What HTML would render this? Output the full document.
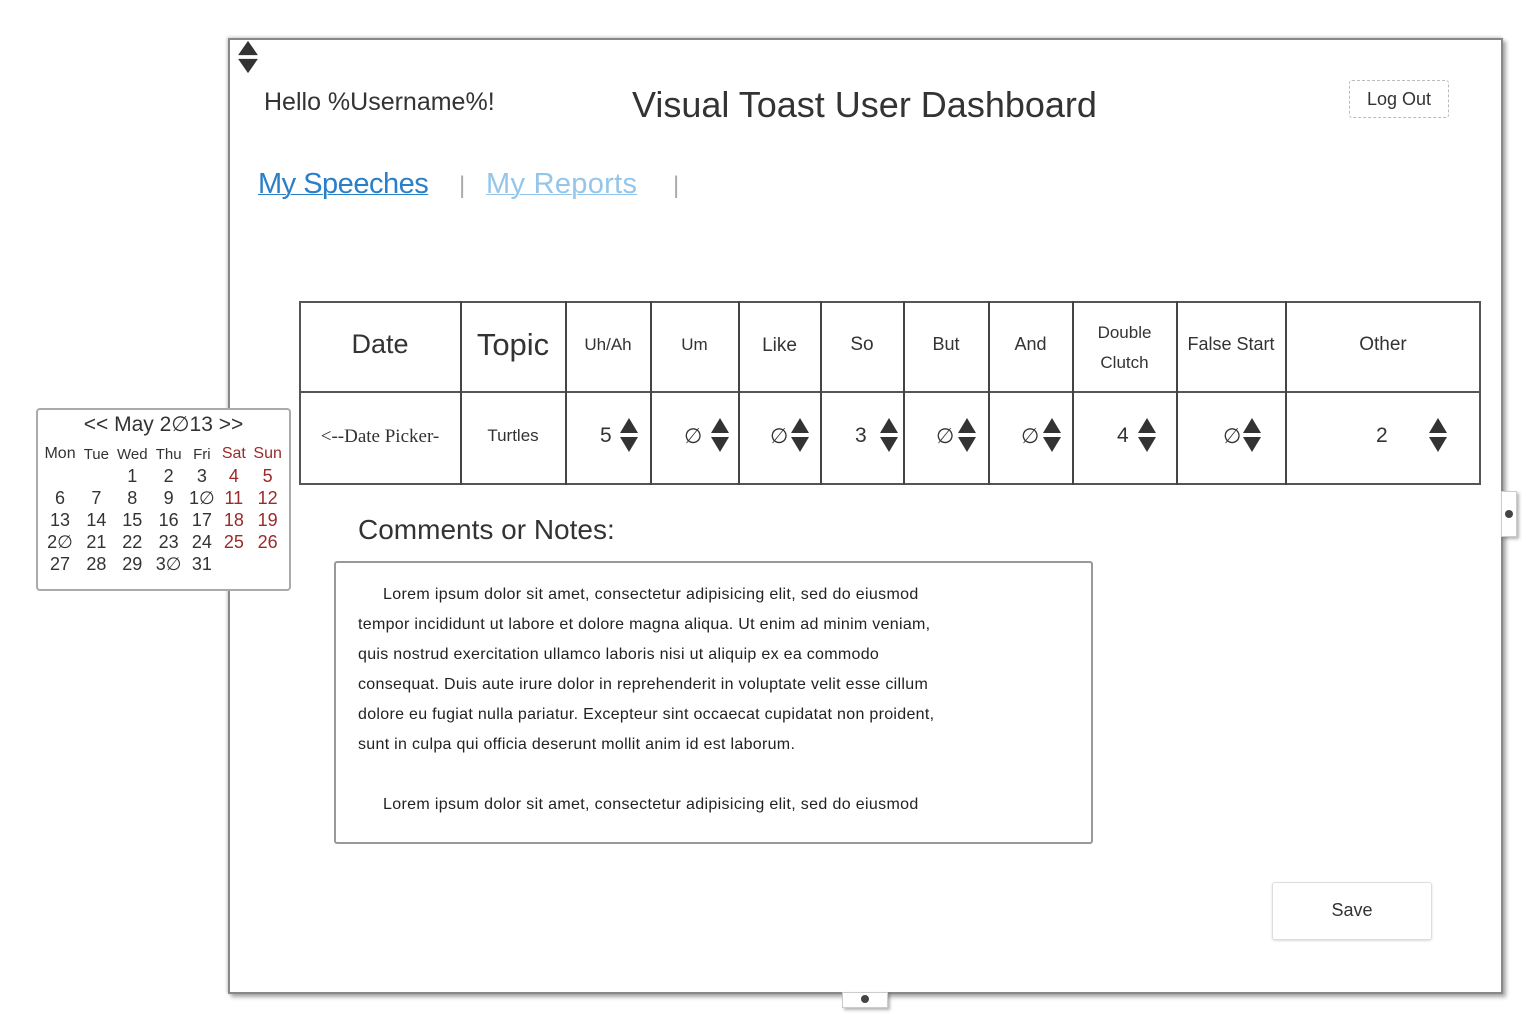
<!DOCTYPE html>
<html><head><meta charset="utf-8"><style>
*{margin:0;padding:0;box-sizing:border-box}
body{width:1526px;height:1014px;background:#fff;position:relative;overflow:hidden;font-family:"Liberation Sans",sans-serif;color:#333}
.a{position:absolute;white-space:nowrap}
.frame{position:absolute;left:228px;top:38px;width:1275px;height:956px;border:2px solid #888;box-shadow:3px 3px 4px rgba(0,0,0,.35),-1px -1px 3px rgba(0,0,0,.2);background:#fff}
.c{text-align:center}
.sp{position:absolute;width:18px;height:34px}
.sp:before{content:"";position:absolute;left:0;top:0;border-left:9px solid transparent;border-right:9px solid transparent;border-bottom:15px solid #333}
.sp:after{content:"";position:absolute;left:0;top:19px;border-left:9px solid transparent;border-right:9px solid transparent;border-top:15px solid #333}
.vl{position:absolute;width:2px;background:#444}
.hl{position:absolute;height:2px;background:#555}
.num{font-size:21px}
.cal td{text-align:center;font-size:18px;height:22px;padding:0}
.red{color:#9b2a2a}
.tx{font-size:16px;color:#222}
</style></head><body>
<div class="frame"></div>
<div class="sp" style="left:239px;top:40px;transform:scale(1.1,0.95)"></div>
<div class="a" style="left:264px;top:88px;font-size:25px;color:#333">Hello %Username%!</div>
<div class="a" style="left:632px;top:84px;font-size:36px;color:#333">Visual Toast User Dashboard</div>
<div class="a c" style="left:1349px;top:80px;width:100px;height:38px;border:1px dashed #bbb;border-radius:3px;font-size:18px;line-height:36px">Log Out</div>
<div class="a" style="left:258px;top:168px;font-size:29px;letter-spacing:-0.5px;color:#2a7fc9;text-decoration:underline;text-decoration-thickness:1px">My Speeches</div>
<div class="a" style="left:459px;top:172px;font-size:24px;color:#aaa">|</div>
<div class="a" style="left:486px;top:168px;font-size:29px;letter-spacing:.3px;color:#93c6ea;text-decoration:underline;text-decoration-thickness:1px">My Reports</div>
<div class="a" style="left:673px;top:172px;font-size:24px;color:#aaa">|</div>

<div class="a" style="left:299px;top:301px;width:1182px;height:184px;border:2px solid #555"></div>
<div class="hl" style="left:299px;top:391px;width:1182px"></div>
<div class="vl" style="left:460px;top:301px;height:184px"></div>
<div class="vl" style="left:565px;top:301px;height:184px"></div>
<div class="vl" style="left:650px;top:301px;height:184px"></div>
<div class="vl" style="left:738px;top:301px;height:184px"></div>
<div class="vl" style="left:820px;top:301px;height:184px"></div>
<div class="vl" style="left:903px;top:301px;height:184px"></div>
<div class="vl" style="left:988px;top:301px;height:184px"></div>
<div class="vl" style="left:1072px;top:301px;height:184px"></div>
<div class="vl" style="left:1176px;top:301px;height:184px"></div>
<div class="vl" style="left:1285px;top:301px;height:184px"></div>
<div class="a c" style="left:300px;top:329px;width:160px;font-size:27px">Date</div>
<div class="a c" style="left:461px;top:327px;width:104px;font-size:31px">Topic</div>
<div class="a c" style="left:566px;top:335px;width:84px;font-size:17px">Uh/Ah</div>
<div class="a c" style="left:651px;top:335px;width:87px;font-size:17px">Um</div>
<div class="a c" style="left:739px;top:335px;width:81px;font-size:19px">Like</div>
<div class="a c" style="left:821px;top:334px;width:82px;font-size:19px">So</div>
<div class="a c" style="left:904px;top:334px;width:84px;font-size:18px">But</div>
<div class="a c" style="left:989px;top:334px;width:83px;font-size:18px">And</div>
<div class="a c" style="left:1073px;top:318px;width:103px;font-size:17px;line-height:30px;white-space:normal">Double<br>Clutch</div>
<div class="a c" style="left:1177px;top:334px;width:108px;font-size:18px">False Start</div>
<div class="a c" style="left:1286px;top:334px;width:194px;font-size:19px">Other</div>
<div class="a c" style="left:300px;top:426px;width:160px;font-family:'Liberation Serif',serif;font-size:19px;color:#333">&lt;--Date Picker-</div>
<div class="a c" style="left:461px;top:426px;width:104px;font-size:17px">Turtles</div>
<div class="a num" style="left:600px;top:424px">5</div><div class="sp" style="left:620px;top:418px"></div>
<div class="a num" style="left:684px;top:424px">&#8709;</div><div class="sp" style="left:711px;top:418px"></div>
<div class="a num" style="left:770px;top:424px">&#8709;</div><div class="sp" style="left:791px;top:418px"></div>
<div class="a num" style="left:855px;top:424px">3</div><div class="sp" style="left:880px;top:418px"></div>
<div class="a num" style="left:936px;top:424px">&#8709;</div><div class="sp" style="left:958px;top:418px"></div>
<div class="a num" style="left:1021px;top:424px">&#8709;</div><div class="sp" style="left:1043px;top:418px"></div>
<div class="a num" style="left:1117px;top:424px">4</div><div class="sp" style="left:1138px;top:418px"></div>
<div class="a num" style="left:1223px;top:424px">&#8709;</div><div class="sp" style="left:1243px;top:418px"></div>
<div class="a num" style="left:1376px;top:424px">2</div><div class="sp" style="left:1429px;top:418px"></div>

<div class="a" style="left:358px;top:514px;font-size:28px;color:#333">Comments or Notes:</div>
<div class="a" style="left:334px;top:561px;width:759px;height:283px;border:2px solid #999;border-radius:3px"></div>
<div class="a tx" style="left:383px;top:586px;letter-spacing:.35px">Lorem ipsum dolor sit amet, consectetur adipisicing elit, sed do eiusmod</div>
<div class="a tx" style="left:358px;top:616px;letter-spacing:.3px">tempor incididunt ut labore et dolore magna aliqua. Ut enim ad minim veniam,</div>
<div class="a tx" style="left:358px;top:646px;letter-spacing:.3px">quis nostrud exercitation ullamco laboris nisi ut aliquip ex ea commodo</div>
<div class="a tx" style="left:358px;top:676px;letter-spacing:.3px">consequat. Duis aute irure dolor in reprehenderit in voluptate velit esse cillum</div>
<div class="a tx" style="left:358px;top:706px;letter-spacing:.3px">dolore eu fugiat nulla pariatur. Excepteur sint occaecat cupidatat non proident,</div>
<div class="a tx" style="left:358px;top:736px;letter-spacing:.3px">sunt in culpa qui officia deserunt mollit anim id est laborum.</div>
<div class="a tx" style="left:383px;top:796px;letter-spacing:.35px">Lorem ipsum dolor sit amet, consectetur adipisicing elit, sed do eiusmod</div>

<div class="a c" style="left:1272px;top:882px;width:160px;height:58px;border:1px solid #ddd;border-radius:3px;box-shadow:0 1px 2px rgba(0,0,0,.15);font-size:18px;line-height:54px">Save</div>

<div class="a" style="left:1501px;top:491px;width:16px;height:46px;background:#fff;border:1px solid #ccc;box-shadow:2px 2px 3px rgba(0,0,0,.3)"></div>
<div class="a" style="left:1505px;top:510px;width:8px;height:8px;border-radius:50%;background:#444"></div>
<div class="a" style="left:842px;top:992px;width:46px;height:16px;background:#fff;border:1px solid #ccc;box-shadow:2px 2px 3px rgba(0,0,0,.3)"></div>
<div class="a" style="left:861px;top:995px;width:8px;height:8px;border-radius:50%;background:#444"></div>

<div class="a" style="left:36px;top:408px;width:255px;height:183px;border:2px solid #aaa;border-radius:4px;background:#fff"></div>
<div class="a c" style="left:36px;top:412px;width:255px;font-size:21px">&lt;&lt; May 2&#8709;13 &gt;&gt;</div>
<table class="a cal" style="left:40px;top:443px;width:246px;border-collapse:collapse">
<tr><td style="font-size:16px">Mon</td><td style="font-size:15px">Tue</td><td style="font-size:15px">Wed</td><td style="font-size:15px">Thu</td><td style="font-size:15px">Fri</td><td class="red" style="font-size:16px">Sat</td><td class="red" style="font-size:16px">Sun</td></tr>
<tr><td></td><td></td><td>1</td><td>2</td><td>3</td><td class="red">4</td><td class="red">5</td></tr>
<tr><td>6</td><td>7</td><td>8</td><td>9</td><td>1&#8709;</td><td class="red">11</td><td class="red">12</td></tr>
<tr><td>13</td><td>14</td><td>15</td><td>16</td><td>17</td><td class="red">18</td><td class="red">19</td></tr>
<tr><td>2&#8709;</td><td>21</td><td>22</td><td>23</td><td>24</td><td class="red">25</td><td class="red">26</td></tr>
<tr><td>27</td><td>28</td><td>29</td><td>3&#8709;</td><td>31</td><td></td><td></td></tr>
</table>
</body></html>
